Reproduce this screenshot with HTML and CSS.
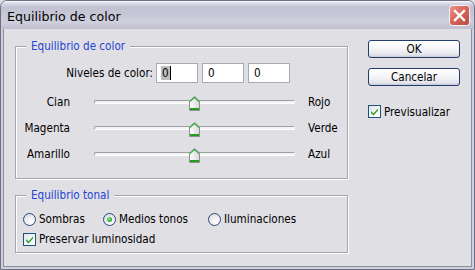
FILE: index.html
```html
<!DOCTYPE html>
<html lang="es">
<head>
<meta charset="utf-8">
<title>Equilibrio de color</title>
<link rel="stylesheet" href="styles.css">
</head>
<body>
<div class="window">
  <div class="titlebar">
    <span class="title">Equilibrio de color</span>
    <span class="close">
      <svg width="21" height="21" viewBox="0 0 21 21">
        <defs>
          <linearGradient id="cg" x1="0" y1="0" x2="1" y2="1">
            <stop offset="0" stop-color="#eb9a8e"/>
            <stop offset="0.45" stop-color="#d8675c"/>
            <stop offset="1" stop-color="#bb4640"/>
          </linearGradient>
        </defs>
        <rect x="0.5" y="0.5" width="20" height="20" rx="3" fill="url(#cg)" stroke="#f4f4f8"/>
        <path d="M6 6 L15 15 M15 6 L6 15" stroke="#ffffff" stroke-width="2.4" stroke-linecap="square"/>
      </svg>
    </span>
  </div>
  <div class="client">
    <div class="left">
      <div class="group g1">
        <span class="legend">Equilibrio de color</span>
        <div class="levels">
          <span class="levels-label">Niveles de color:</span>
          <span class="field"><span class="sel">0</span><span class="caret"></span></span>
          <span class="field">0</span>
          <span class="field">0</span>
        </div>
        <div class="sliders">
          <div class="slider-row">
            <span class="lab-l">Cian</span>
            <span class="track">
              <span class="thumb"><svg width="11" height="15" viewBox="0 0 11 15"><use href="#thumbshape"/></svg></span>
            </span>
            <span class="lab-r">Rojo</span>
          </div>
          <div class="slider-row">
            <span class="lab-l">Magenta</span>
            <span class="track">
              <span class="thumb"><svg width="11" height="15" viewBox="0 0 11 15"><use href="#thumbshape"/></svg></span>
            </span>
            <span class="lab-r">Verde</span>
          </div>
          <div class="slider-row">
            <span class="lab-l">Amarillo</span>
            <span class="track">
              <span class="thumb"><svg width="11" height="15" viewBox="0 0 11 15"><use href="#thumbshape"/></svg></span>
            </span>
            <span class="lab-r">Azul</span>
          </div>
        </div>
      </div>
      <div class="group g2">
        <span class="legend">Equilibrio tonal</span>
        <div class="radios">
          <span class="opt"><span class="radio"></span>Sombras</span>
          <span class="opt"><span class="radio on"></span>Medios tonos</span>
          <span class="opt"><span class="radio"></span>Iluminaciones</span>
        </div>
        <span class="opt preserve"><span class="check"><svg width="11" height="11" viewBox="0 0 11 11"><use href="#tick"/></svg></span>Preservar luminosidad</span>
      </div>
    </div>
    <div class="right">
      <button class="btn">OK</button>
      <button class="btn">Cancelar</button>
      <span class="opt prev"><span class="check"><svg width="11" height="11" viewBox="0 0 11 11"><use href="#tick"/></svg></span>Previsualizar</span>
    </div>
  </div>
</div>

<svg class="defs" width="0" height="0">
  <defs>
    <linearGradient id="tg" x1="0" y1="0" x2="1" y2="0">
      <stop offset="0" stop-color="#ffffff"/>
      <stop offset="1" stop-color="#d6d6dc"/>
    </linearGradient>
    <g id="thumbshape">
      <path d="M0.5 5 L5.5 0.5 L10.5 5 L10.5 14.5 L0.5 14.5 Z" fill="url(#tg)" stroke="#8e8f8f"/>
      <path d="M1 5.5 L5.5 1.5 L10 5.5" fill="none" stroke="#3fb04a" stroke-width="1.3"/>
      <rect x="1" y="12" width="9" height="2" fill="#21a121"/>
    </g>
    <path id="tick" d="M2 5 L4.5 7.5 L9 2.5 L9 4.5 L4.5 9.5 L2 7 Z" fill="#21a121"/>
  </defs>
</svg>
</body>
</html>
```

FILE: styles.css
```css
html, body {
  margin: 0;
  padding: 0;
  background: #e0dfe3;
}

body {
  font-family: "DejaVu Sans Condensed", "DejaVu Sans", sans-serif;
  font-stretch: condensed;
  font-size: 11.6px;
  color: #000;
}

.defs {
  position: absolute;
  width: 0;
  height: 0;
}

.window {
  width: 475px;
  height: 270px;
  box-sizing: border-box;
  border: 1px solid #6f6f86;
  border-radius: 7px 7px 0 0;
  background: #cfcfdc;
  padding: 0 2px 2px;
  display: flex;
  flex-direction: column;
  overflow: hidden;
}

.titlebar {
  height: 28px;
  margin: 0 -2px;
  flex: none;
  display: flex;
  align-items: center;
  justify-content: space-between;
  padding: 2px 4px 0 6px;
  box-sizing: border-box;
  background: linear-gradient(#ffffff 0px, #dcdce7 2px, #c2c2d3 6px, #c6c6d6 13px, #cfcfdd 21px, #c0c0d0 27px);
}

.title {
  font-family: "DejaVu Sans", sans-serif;
  font-stretch: normal;
  font-size: 12.6px;
  color: #000;
}

.close {
  display: flex;
  margin-top: -2px;
}

.client {
  flex: 1;
  border: 1px solid #8d8da3;
  border-top: none;
  background: #e0dfe3;
  display: flex;
  align-items: flex-start;
  gap: 20px;
  padding: 11px 0 0 11px;
}

.left {
  width: 333px;
  padding-top: 6px;
  display: flex;
  flex-direction: column;
  gap: 16px;
}

.group {
  position: relative;
  box-sizing: border-box;
  width: 333px;
  border: 1px solid #a4a4aa;
  box-shadow: inset 1px 1px 0 #fff, 1px 1px 0 #fff;
}

.legend {
  position: absolute;
  top: -8px;
  left: 10px;
  padding: 0 5px;
  background: #e0dfe3;
  color: #1f44d6;
  line-height: 14px;
}

.g1 {
  padding: 16px 0 11px;
}

.levels {
  display: flex;
  align-items: center;
  height: 20px;
  gap: 4px;
}

.levels-label {
  width: 137px;
  text-align: right;
  margin-right: -1px;
}

.field {
  box-sizing: border-box;
  width: 42px;
  height: 20px;
  border: 1px solid #a5acb2;
  background: #fff;
  padding-left: 5px;
  line-height: 18px;
  display: flex;
  align-items: center;
}

.sel {
  background: #bdbdbd;
  margin-left: -1px;
  padding: 0 1px;
  line-height: 14px;
}

.caret {
  width: 1px;
  height: 14px;
  background: #000;
}

.sliders {
  margin-top: 6px;
  display: flex;
  flex-direction: column;
}

.slider-row {
  display: flex;
  align-items: center;
  height: 26px;
}

.lab-l {
  width: 54px;
  text-align: right;
}

.track {
  position: relative;
  box-sizing: border-box;
  width: 201px;
  height: 4px;
  margin-left: 24px;
  border: 1px solid;
  border-color: #9d9da3 #ffffff #ffffff #9d9da3;
  border-radius: 2px;
  background: #f4f4f4;
}

.thumb {
  position: absolute;
  top: -5px;
  left: calc(50% - 6px);
  display: flex;
}

.lab-r {
  margin-left: 13px;
}

.g2 {
  padding: 15px 0 5px 7px;
  display: flex;
  flex-direction: column;
  gap: 4px;
}

.radios {
  display: grid;
  grid-template-columns: 80px 105px auto;
}

.opt {
  display: flex;
  align-items: center;
  gap: 3px;
  height: 16px;
  white-space: nowrap;
}

.radio {
  box-sizing: border-box;
  width: 13px;
  height: 13px;
  border-radius: 50%;
  border: 1px solid #2c4a78;
  background: radial-gradient(circle at 65% 70%, #ffffff 0, #f2f2f4 35%, #d4d4dc 100%);
  display: flex;
  align-items: center;
  justify-content: center;
  flex: none;
}

.radio.on::after {
  content: "";
  width: 5px;
  height: 5px;
  border-radius: 50%;
  background: radial-gradient(circle at 40% 40%, #9be39b 0, #2fae2f 60%, #1d8f1d 100%);
}

.check {
  box-sizing: border-box;
  width: 13px;
  height: 13px;
  border: 1px solid #1c5180;
  background: linear-gradient(135deg, #e4e4e8 0, #f6f6f8 60%, #ffffff 100%);
  display: flex;
  align-items: center;
  justify-content: center;
  flex: none;
}

.right {
  width: 92px;
  display: flex;
  flex-direction: column;
}

.btn {
  box-sizing: border-box;
  width: 92px;
  height: 18px;
  margin: 0 0 10px;
  padding: 0;
  border: 1px solid #223c6e;
  border-radius: 3px;
  background: linear-gradient(#ffffff 0, #f6f6f9 45%, #e4e4ec 85%, #c9c9d6 100%);
  font: inherit;
  color: #000;
  line-height: 16px;
}

.prev {
  margin-top: 9px;
  height: 13px;
}
```
